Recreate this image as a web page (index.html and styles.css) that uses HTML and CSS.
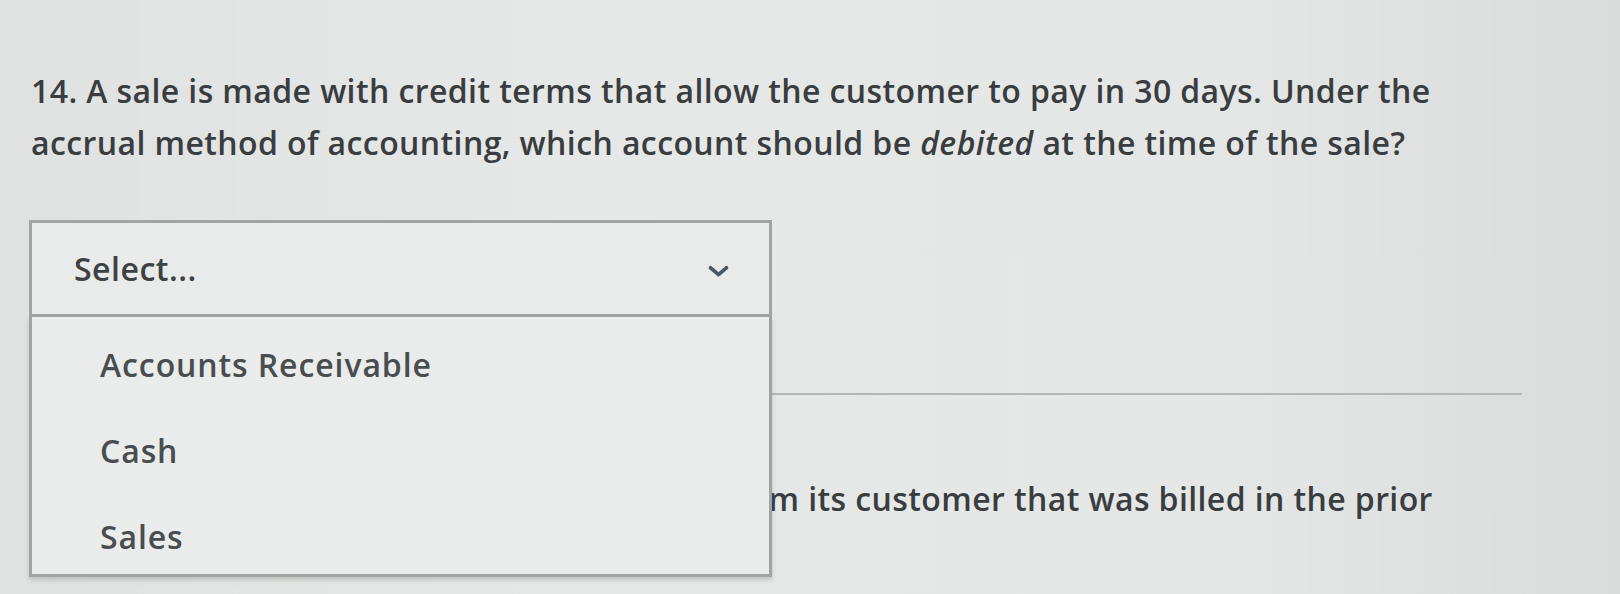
FILE: index.html
```html
<!DOCTYPE html>
<html lang="en">
<head>
<meta charset="utf-8">
<title>Quiz</title>
<link rel="stylesheet" href="styles.css">
</head>
<body>
<main class="page">
  <section class="question">
    <p class="prompt">14. A sale is made with credit terms that allow the customer to pay in 30 days. Under the accrual method of accounting, which account should be <em>debited</em> at the time of the sale?</p>
    <div class="select">
      <div class="select-head">
        <span class="select-value">Select...</span>
        <svg class="chevron" viewBox="0 0 20 12" aria-hidden="true"><path d="M2.5 2.5 L10 9 L17.5 2.5" /></svg>
      </div>
      <ul class="menu">
        <li class="option">Accounts Receivable</li>
        <li class="option">Cash</li>
        <li class="option">Sales</li>
      </ul>
    </div>
  </section>
  <hr class="sep">
  <section class="question">
    <p class="prompt">15. A company received a delayed payment from its customer that was billed in the prior period.</p>
  </section>
</main>
</body>
</html>
```
FILE: styles.css
```css
html, body {
  margin: 0;
  padding: 0;
}
body {
  width: 1620px;
  height: 594px;
  overflow: hidden;
  background: linear-gradient(90deg, #dfe2e0 0%, #e5e8e6 35%, #e4e7e5 75%, #d9dcda 100%);
  font-family: "Open Sans", "Liberation Sans", sans-serif;
  color: #3a3d3f;
}
.page {
  padding: 65px 98px 0 31px;
}
.question {
  position: relative;
}
.prompt {
  margin: 0;
  font-size: 32px;
  font-weight: 600;
  line-height: 52px;
  letter-spacing: 0.4px;
}
.prompt em {
  font-style: italic;
}
.select {
  position: relative;
  width: 743px;
  margin-top: 51px;
  margin-left: -2px;
  margin-bottom: 76px;
  box-sizing: border-box;
}
.select-head {
  height: 97px;
  box-sizing: border-box;
  border: 3px solid #a0a4a3;
  background: #e8ebe9;
  display: flex;
  align-items: center;
  justify-content: space-between;
  padding: 0 40px 0 42px;
}
.select-value {
  font-size: 32px;
  font-weight: 600;
  letter-spacing: 0.5px;
  color: #3e4143;
}
.chevron {
  width: 21px;
  height: 13px;
  fill: none;
  stroke: #4a5865;
  stroke-width: 3.6;
  stroke-linecap: round;
  stroke-linejoin: round;
  margin-top: 6px;
}
.menu {
  position: absolute;
  top: 100%;
  left: 0;
  right: 0;
  z-index: 2;
  margin: 0;
  padding: 4px 0 0;
  list-style: none;
  background: #e9ecea;
  border: 3px solid #a0a4a3;
  border-top: none;
  height: 260px;
  box-sizing: border-box;
  box-shadow: 0 3px 4px rgba(90, 95, 92, 0.25);
}
.option {
  height: 86px;
  display: flex;
  align-items: center;
  padding-left: 68px;
  font-size: 32px;
  font-weight: 600;
  letter-spacing: 0.9px;
  color: #4a4d4f;
}
.sep {
  margin: 0;
  border: none;
  height: 2px;
  background: #b3b7b5;
}
.question + .sep + .question .prompt {
  margin-top: 78px;
}
```
